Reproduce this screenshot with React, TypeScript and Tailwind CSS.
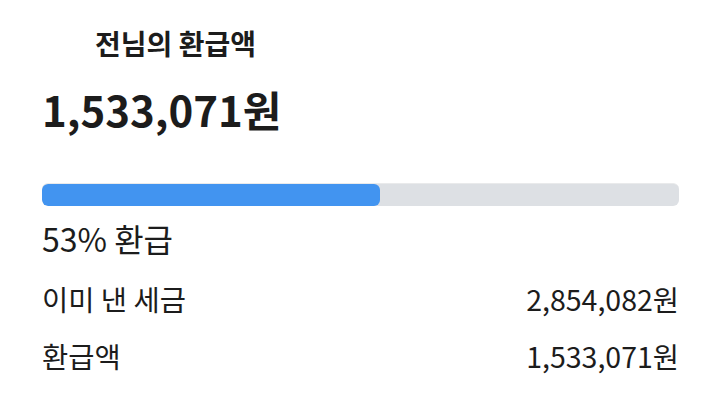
import React from "react";

const font = { fontFamily: '"Noto Sans CJK KR", "Noto Sans", sans-serif' };

const rows = [
  { label: "이미 낸 세금", value: "2,854,082원" },
  { label: "환급액", value: "1,533,071원" },
];

export default function App() {
  const percent = 53;
  return (
    <div
      className="w-[720px] h-[405px] bg-white text-[#1c1c1c] overflow-hidden pl-[42px] pr-[41px]"
      style={font}
    >
      <h2 className="pl-[53px] pt-[25px] text-[28px] font-bold leading-[36px]">
        전님의 환급액
      </h2>
      <div className="mt-[23px] text-[42px] font-bold leading-[50px]">
        1,533,071원
      </div>
      <div className="mt-[49px] h-[23px] rounded-[6px] bg-[#dde0e4] border-t border-[#e9eaeb] overflow-hidden">
        <div
          className="h-full rounded-[6px] bg-[#4294f0]"
          style={{ width: `${percent}%` }}
        />
      </div>
      <div className="mt-[12px] text-[32px] leading-[40px]">{percent}% 환급</div>
      <div className="mt-[23px] flex flex-col gap-[21px]">
        {rows.map((r) => (
          <div
            key={r.label}
            className="flex justify-between items-center text-[28.5px] leading-[36px]"
          >
            <span>{r.label}</span>
            <span>{r.value}</span>
          </div>
        ))}
      </div>
    </div>
  );
}
